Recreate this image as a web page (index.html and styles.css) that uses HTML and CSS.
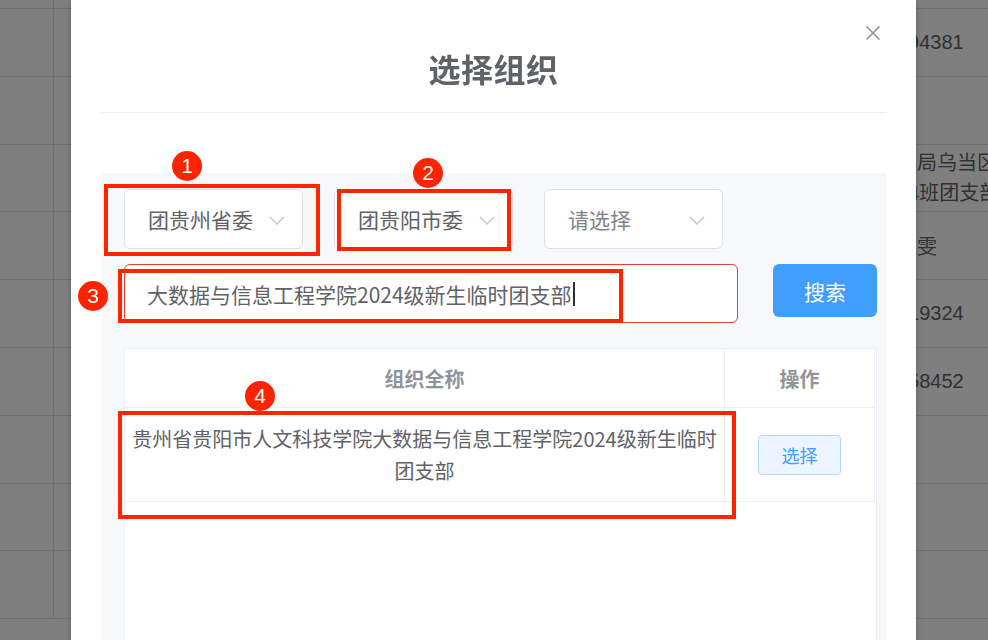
FILE: index.html
```html
<!DOCTYPE html>
<html lang="zh-CN">
<head>
<meta charset="utf-8">
<title>选择组织</title>
<link rel="stylesheet" href="styles.css">
</head>
<body>
  <!-- list page behind the dialog -->
  <div class="page">
    <div class="page-row page-row--top"><div class="c-idx"></div><div class="c-mid"></div><div class="c-end"></div></div>
    <div class="page-row"><div class="c-idx"></div><div class="c-mid"></div><div class="c-end">194381</div></div>
    <div class="page-row"><div class="c-idx"></div><div class="c-mid"></div><div class="c-end"></div></div>
    <div class="page-row"><div class="c-idx"></div><div class="c-mid"></div><div class="c-end c-end--wrap">分局乌当区<br>24班团支部</div></div>
    <div class="page-row"><div class="c-idx"></div><div class="c-mid"></div><div class="c-end">晓雯</div></div>
    <div class="page-row"><div class="c-idx"></div><div class="c-mid"></div><div class="c-end">619324</div></div>
    <div class="page-row"><div class="c-idx"></div><div class="c-mid"></div><div class="c-end">558452</div></div>
    <div class="page-row"><div class="c-idx"></div><div class="c-mid"></div><div class="c-end"></div></div>
    <div class="page-row"><div class="c-idx"></div><div class="c-mid"></div><div class="c-end"></div></div>
    <div class="page-row"><div class="c-idx"></div><div class="c-mid"></div><div class="c-end"></div></div>
  </div>

  <div class="mask"></div>

  <div class="dialog">
    <div class="dialog-header">
      <h2 class="dialog-title">选择组织</h2>
      <button class="dialog-close" aria-label="关闭">
        <svg width="16" height="16" viewBox="0 0 16 16"><path d="M1.5 1.5 L14.5 14.5 M14.5 1.5 L1.5 14.5" stroke="#909399" stroke-width="1.6" fill="none"/></svg>
      </button>
    </div>

    <div class="dialog-body">
      <div class="panel">
        <div class="select-row">
          <div class="select"><span class="select-text">团贵州省委</span><svg class="chev" width="16" height="9" viewBox="0 0 16 9"><path d="M1 1 L8 8 L15 1" stroke="#c0c4cc" stroke-width="1.3" fill="none"/></svg></div>
          <div class="select"><span class="select-text">团贵阳市委</span><svg class="chev" width="16" height="9" viewBox="0 0 16 9"><path d="M1 1 L8 8 L15 1" stroke="#c0c4cc" stroke-width="1.3" fill="none"/></svg></div>
          <div class="select"><span class="select-text select-text--placeholder">请选择</span><svg class="chev" width="16" height="9" viewBox="0 0 16 9"><path d="M1 1 L8 8 L15 1" stroke="#c0c4cc" stroke-width="1.3" fill="none"/></svg></div>
        </div>

        <div class="search-row">
          <div class="search-input"><span>大数据与信息工程学院2024级新生临时团支部</span><i class="caret"></i></div>
          <button class="btn-primary">搜索</button>
        </div>

        <div class="result">
          <div class="result-inner">
            <div class="t-row t-head">
              <div class="t-cell t-name">组织全称</div>
              <div class="t-cell t-op">操作</div>
            </div>
            <div class="t-row t-body">
              <div class="t-cell t-name">贵州省贵阳市人文科技学院大数据与信息工程学院2024级新生临时团支部</div>
              <div class="t-cell t-op"><button class="btn-plain">选择</button></div>
            </div>
          </div>
        </div>
      </div>
    </div>
  </div>

  <!-- numbered callouts -->
  <div class="mark mark-1"></div>
  <div class="mark mark-2"></div>
  <div class="mark mark-3"></div>
  <div class="mark mark-4"></div>
  <span class="badge badge-1">1</span>
  <span class="badge badge-2">2</span>
  <span class="badge badge-3">3</span>
  <span class="badge badge-4">4</span>
</body>
</html>
```

FILE: styles.css
```css
* { box-sizing: border-box; }

html, body {
  margin: 0;
  padding: 0;
  width: 988px;
  height: 640px;
  overflow: hidden;
  background: #fff;
  font-family: "Noto Sans CJK SC", "Noto Sans", sans-serif;
}

/* background list */
.page {
  display: flex;
  flex-direction: column;
}
.page-row {
  display: flex;
  height: 67.8px;
  border-bottom: 1px solid #e0e0e0;
  color: #606266;
  font-size: 20px;
}
.page-row--top { height: 9px; }
.c-idx { flex: none; width: 54px; border-right: 1px solid #e0e0e0; }
.c-mid { flex: none; width: 843px; }
.c-end {
  flex: 1;
  min-width: 0;
  display: flex;
  align-items: center;
  white-space: nowrap;
  font-family: "Liberation Sans", "Noto Sans CJK SC", sans-serif;
}
.c-end--wrap { line-height: 30px; }

.mask {
  position: fixed;
  inset: 0;
  background: rgba(0, 0, 0, 0.5);
}

/* dialog */
.dialog {
  position: fixed;
  top: 0;
  left: 71px;
  width: 845px;
  height: 700px;
  background: #fff;
  box-shadow: 0 0 6px rgba(0, 0, 0, 0.25);
}
.dialog-header {
  position: relative;
  margin: 0 30px;
  height: 113px;
  padding-top: 24px;
  border-bottom: 1px solid #ebeef5;
  display: flex;
  align-items: center;
  justify-content: center;
}
.dialog-title {
  margin: 0;
  font-size: 32px;
  font-weight: 700;
  color: #5f6266;
  letter-spacing: 0.5px;
}
.dialog-close {
  position: absolute;
  top: 25px;
  right: 5px;
  width: 16px;
  height: 16px;
  padding: 0;
  border: 0;
  background: none;
  display: flex;
}

.dialog-body { padding: 60px 30px 0; }

.panel {
  background: #f7f8fa;
  padding: 16px 9px 0 23px;
  height: 520px;
}

.select-row {
  display: flex;
  gap: 31px;
}
.select {
  width: 179px;
  height: 60px;
  background: #fff;
  border: 1px solid #dcdfe6;
  border-radius: 6px;
  padding: 0 17px 0 23px;
  display: flex;
  align-items: center;
  justify-content: space-between;
}
.select-text {
  font-size: 21px;
  color: #606266;
}
.select-text--placeholder { color: #818388; }
.chev { margin-top: 2px; }

.search-row {
  display: flex;
  align-items: flex-start;
  margin-top: 15px;
}
.search-input {
  width: 615px;
  height: 59px;
  background: #fff;
  border: 1px solid #ec3c34;
  border-radius: 6px;
  padding-left: 22px;
  display: flex;
  align-items: center;
  font-size: 21px;
  color: #606266;
}
.caret {
  width: 2px;
  height: 24px;
  background: #303133;
  margin-left: 1px;
}
.btn-primary {
  margin-left: 35px;
  width: 104px;
  height: 53px;
  border: 0;
  border-radius: 6px;
  background: #409eff;
  color: #fff;
  font-family: inherit;
  font-size: 21px;
}

.result {
  margin-top: 25px;
  width: 753px;
  height: 320px;
  background: #fff;
  border: 1px solid #ebeef5;
  border-bottom: 0;
}
.result-inner {
  width: 750px;
  border-right: 1px solid #ebeef5;
}
.t-row {
  display: flex;
  border-bottom: 1px solid #ebeef5;
}
.t-head { height: 59px; }
.t-cell {
  display: flex;
  align-items: center;
  justify-content: center;
  text-align: center;
}
.t-name {
  width: 600px;
  padding: 0 6px;
  border-right: 1px solid #ebeef5;
}
.t-op { flex: 1; }
.t-head .t-cell {
  font-size: 20px;
  font-weight: 700;
  color: #909399;
}
.t-body { height: 94px; }
.t-body .t-name {
  font-size: 20px;
  line-height: 32px;
  color: #606266;
}
.btn-plain {
  width: 83px;
  height: 40px;
  background: #ecf5ff;
  border: 1px solid #b3d8ff;
  border-radius: 4px;
  color: #409eff;
  font-family: inherit;
  font-size: 18px;
  padding: 0;
}

/* callouts */
.mark {
  position: fixed;
  border: 4px solid #ff2400;
}
.mark-1 { left: 104px; top: 184px; width: 216px; height: 72px; }
.mark-2 { left: 337px; top: 189px; width: 174px; height: 62px; }
.mark-3 { left: 118px; top: 269px; width: 505px; height: 54px; }
.mark-4 { left: 118px; top: 411px; width: 618px; height: 108px; }

.badge {
  position: fixed;
  width: 30px;
  height: 30px;
  border-radius: 50%;
  background: #ff2400;
  color: #fff;
  font-family: "Liberation Sans", Arial, sans-serif;
  font-size: 21px;
  line-height: 30px;
  text-align: center;
}
.badge-1 { left: 172px; top: 151px; }
.badge-2 { left: 413px; top: 158px; }
.badge-3 { left: 78px; top: 281px; }
.badge-4 { left: 245px; top: 381px; }
```
